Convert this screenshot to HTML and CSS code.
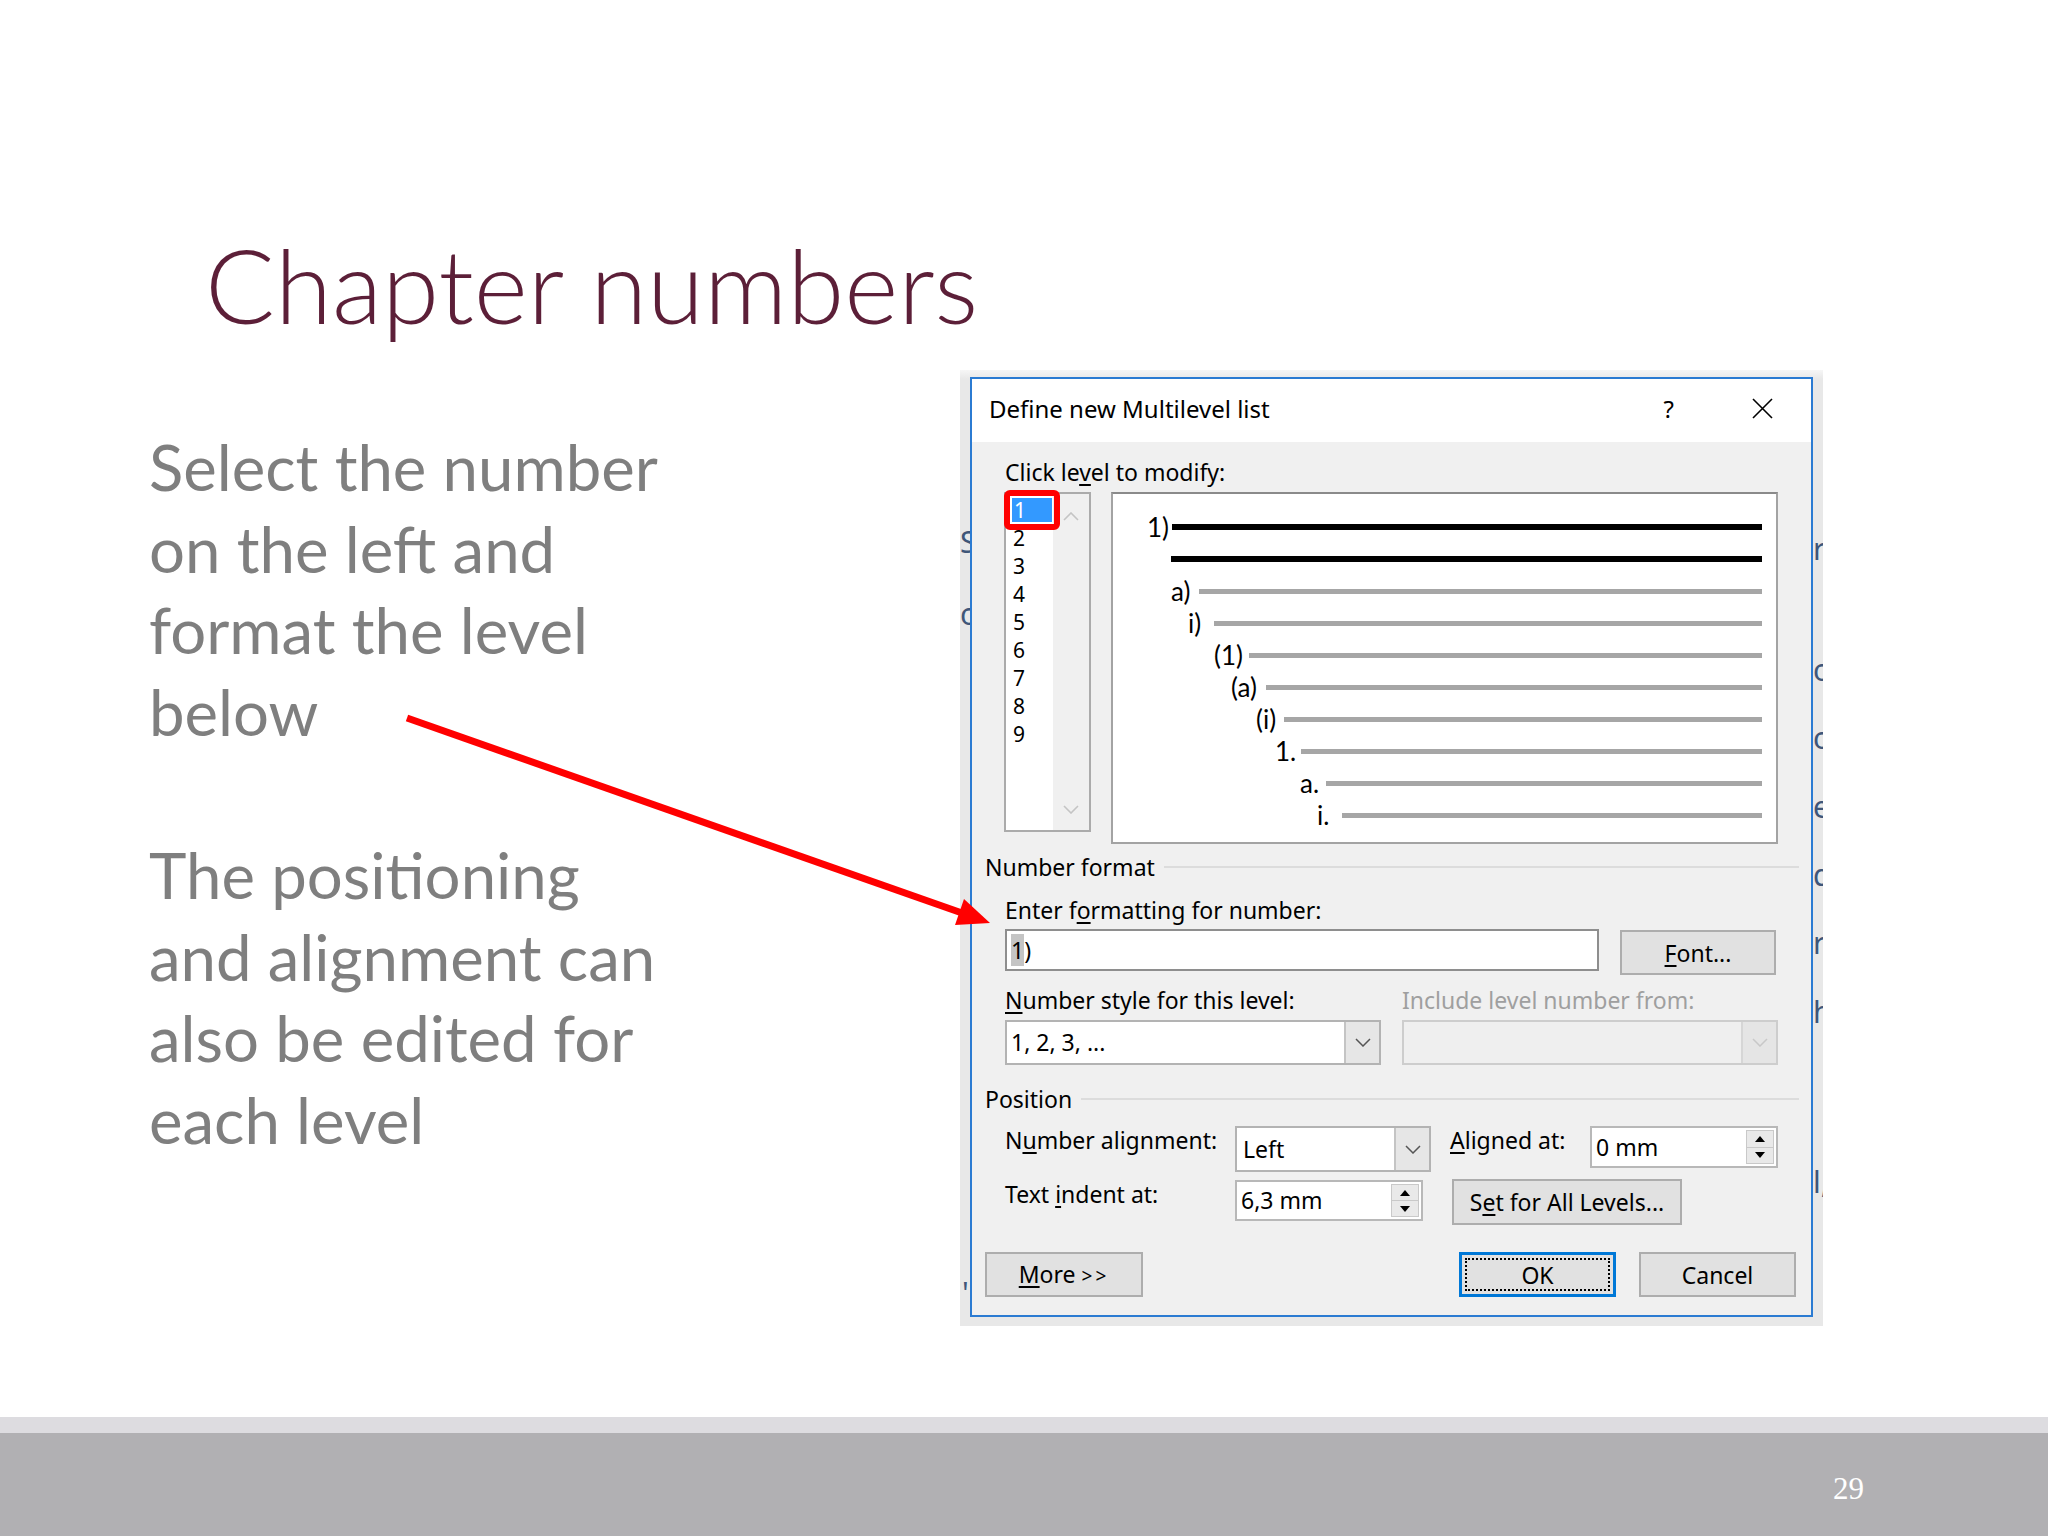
FILE: index.html
```html
<!DOCTYPE html>
<html>
<head>
<meta charset="utf-8">
<title>Chapter numbers</title>
<link rel="stylesheet" href="styles.css">
</head>
<body>
<div class="slide">
  <h1 class="title">Chapter numbers</h1>
  <div class="content">
    <div class="text">
      <p>Select the number<br>on the left and<br>format the level<br>below</p>
      <p>The positioning<br>and alignment can<br>also be edited for<br>each level</p>
    </div>
    <div class="shot">
      <span class="frag fl1">S</span>
      <span class="frag fl2">c</span>
      <span class="frag fl3">'</span>
      <span class="frag fr1">r</span>
      <span class="frag fr2">c</span>
      <span class="frag fr3">c</span>
      <span class="frag fr4">e</span>
      <span class="frag fr5">d</span>
      <span class="frag fr6">r</span>
      <span class="frag fr7">h</span>
      <span class="frag fr8">l,</span>
      <div class="dialog">
        <div class="titlebar">
          <span class="dtitle">Define new Multilevel list</span>
          <span class="help">?</span>
          <svg class="close" width="21" height="21" viewBox="0 0 21 21"><path d="M1 1 L20 20 M20 1 L1 20" stroke="#000" stroke-width="1.6" fill="none"/></svg>
        </div>
        <div class="dbody">
          <div class="lbl ind lbl-click">Click le<u>v</u>el to modify:</div>
          <div class="levels">
            <div class="listbox">
              <div class="nums">
                <div class="num first"><span class="hl">1</span></div>
                <div class="num">2</div>
                <div class="num">3</div>
                <div class="num">4</div>
                <div class="num">5</div>
                <div class="num">6</div>
                <div class="num">7</div>
                <div class="num">8</div>
                <div class="num">9</div>
              </div>
              <div class="sb">
                <svg class="chev up" width="16" height="9" viewBox="0 0 16 9"><polyline points="1,8 8,1 15,8" fill="none" stroke="#c4c4c4" stroke-width="1.6"/></svg>
                <svg class="chev down" width="16" height="9" viewBox="0 0 16 9"><polyline points="1,1 8,8 15,1" fill="none" stroke="#c4c4c4" stroke-width="1.6"/></svg>
              </div>
              <div class="redbox"></div>
            </div>
            <div class="preview">
              <div class="pr r1"><span class="pl">1)</span><span class="ln blk"></span></div>
              <div class="pr r2"><span class="ln blk"></span></div>
              <div class="pr r3"><span class="pl">a)</span><span class="ln"></span></div>
              <div class="pr r4"><span class="pl">i)</span><span class="ln"></span></div>
              <div class="pr r5"><span class="pl">(1)</span><span class="ln"></span></div>
              <div class="pr r6"><span class="pl">(a)</span><span class="ln"></span></div>
              <div class="pr r7"><span class="pl">(i)</span><span class="ln"></span></div>
              <div class="pr r8"><span class="pl">1.</span><span class="ln"></span></div>
              <div class="pr r9"><span class="pl">a.</span><span class="ln"></span></div>
              <div class="pr r10"><span class="pl">i.</span><span class="ln"></span></div>
            </div>
          </div>

          <div class="group g-number"><span>Number format</span><span class="rule"></span></div>
          <div class="lbl ind lbl-enter">Enter f<u>o</u>rmatting for number:</div>
          <div class="row ind row-input">
            <div class="input"><span class="selchar">1</span>)</div>
            <div class="btn btn-font"><span><u>F</u>ont...</span></div>
          </div>
          <div class="row ind row-lbl2">
            <div class="lbl col1"><u>N</u>umber style for this level:</div>
            <div class="lbl disabled">Include level number from:</div>
          </div>
          <div class="row ind row-combos">
            <div class="combo c-style"><span class="ctext">1, 2, 3, ...</span><span class="cbtn"><svg width="16" height="9" viewBox="0 0 16 9"><polyline points="1,1 8,8 15,1" fill="none" stroke="#555" stroke-width="1.5"/></svg></span></div>
            <div class="combo c-include dis"><span class="ctext"></span><span class="cbtn"><svg width="16" height="9" viewBox="0 0 16 9"><polyline points="1,1 8,8 15,1" fill="none" stroke="#c8c8c8" stroke-width="1.5"/></svg></span></div>
          </div>

          <div class="group g-position"><span>Position</span><span class="rule"></span></div>
          <div class="row ind row-pos1">
            <div class="lbl plabel">N<u>u</u>mber alignment:</div>
            <div class="combo c-left"><span class="ctext">Left</span><span class="cbtn"><svg width="16" height="9" viewBox="0 0 16 9"><polyline points="1,1 8,8 15,1" fill="none" stroke="#555" stroke-width="1.5"/></svg></span></div>
            <div class="lbl alabel"><u>A</u>ligned at:</div>
            <div class="spin s-aligned"><span class="stext">0 mm</span><span class="sbtns"><span class="sb-up"><svg width="10" height="6" viewBox="0 0 10 6"><polygon points="0,6 5,0 10,6" fill="#000"/></svg></span><span class="sb-dn"><svg width="10" height="6" viewBox="0 0 10 6"><polygon points="0,0 5,6 10,0" fill="#000"/></svg></span></span></div>
          </div>
          <div class="row ind row-pos2">
            <div class="lbl plabel tlabel">Text <u>i</u>ndent at:</div>
            <div class="spin s-indent"><span class="stext">6,3 mm</span><span class="sbtns"><span class="sb-up"><svg width="10" height="6" viewBox="0 0 10 6"><polygon points="0,6 5,0 10,6" fill="#000"/></svg></span><span class="sb-dn"><svg width="10" height="6" viewBox="0 0 10 6"><polygon points="0,0 5,6 10,0" fill="#000"/></svg></span></span></div>
            <div class="btn btn-setall"><span>S<u>e</u>t for All Levels...</span></div>
          </div>

          <div class="row row-buttons">
            <div class="btn btn-more"><span><u>M</u>ore <span class="gt">&gt;&gt;</span></span></div>
            <div class="btn btn-ok"><span class="focus">OK</span></div>
            <div class="btn btn-cancel"><span>Cancel</span></div>
          </div>
        </div>
      </div>
    </div>
  </div>
  <svg class="arrow" width="2048" height="1536" viewBox="0 0 2048 1536">
    <line x1="407" y1="718" x2="962" y2="913" stroke="#ff0000" stroke-width="7"/>
    <polygon points="990,923 955,925 964,899" fill="#ff0000"/>
  </svg>
  <div class="footer">
    <div class="band1"></div>
    <div class="band2"><span class="pagenum">29</span></div>
  </div>
</div>
</body>
</html>
```

FILE: styles.css
```css
* { box-sizing: border-box; margin: 0; padding: 0; }
html, body { width: 2048px; height: 1536px; background: #ffffff; overflow: hidden; }

.slide {
  position: relative;
  width: 2048px;
  height: 1536px;
  display: flex;
  flex-direction: column;
  padding-top: 223px;
  background: #ffffff;
}

.title {
  font-family: Lato, "Noto Sans", sans-serif;
  font-weight: 300;
  font-size: 103.5px;
  line-height: 122px;
  height: 122px;
  color: #5c1f38;
  margin-left: 205px;
  white-space: nowrap;
}

.content {
  display: flex;
  align-items: flex-start;
  margin-top: 25px;
}

.text {
  width: 960px;
  flex-shrink: 0;
  padding-left: 149px;
  margin-top: 56px;
  font-family: Lato, "Noto Sans", sans-serif;
  font-size: 63.5px;
  line-height: 81.6px;
  color: #7f7f7f;
  white-space: nowrap;
}
.text p + p { margin-top: 81.6px; }

/* screenshot frame */
.shot {
  position: relative;
  flex-shrink: 0;
  width: 863px;
  height: 956px;
  background: linear-gradient(#f6f6f6, #e8e8e8 9px);
  overflow: hidden;
  padding: 7px 10px 0 10px;
}
.frag {
  position: absolute;
  font-family: "Noto Sans", sans-serif;
  font-size: 30px;
  line-height: 40px;
  color: #3f5679;
}
.fl1 { left: 0px; top: 152px; }
.fl2 { left: 0px; top: 224px; }
.fl3 { left: 2px; top: 903px; }
.fr1 { left: 853px; top: 159px; }
.fr2 { left: 853px; top: 280px; }
.fr3 { left: 853px; top: 348px; }
.fr4 { left: 853px; top: 417px; }
.fr5 { left: 853px; top: 485px; }
.fr6 { left: 853px; top: 553px; }
.fr7 { left: 853px; top: 622px; }
.fr8 { left: 853px; top: 792px; }

.dialog {
  position: relative;
  width: 843px;
  height: 940px;
  border: 2px solid #2b7bd2;
  background: #f0f0f0;
  display: flex;
  flex-direction: column;
  font-family: "Noto Sans", sans-serif;
  font-size: 23px;
  color: #000;
}
.dialog u { text-decoration-thickness: 2px; text-underline-offset: 3px; }

.titlebar {
  height: 63px;
  background: #ffffff;
  display: flex;
  align-items: flex-start;
  padding-left: 17px;
  padding-top: 18px;
}
.dtitle { flex: 1; font-size: 24px; line-height: 24px; white-space: nowrap; }
.help { font-size: 24px; line-height: 24px; margin-right: 78px; }
.close { margin-top: 1px; margin-right: 38px; }

.dbody {
  display: flex;
  flex-direction: column;
  padding: 0 12px 0 13px;
}
.lbl { line-height: 24px; white-space: nowrap; }
.ind { margin-left: 20px; }
.lbl-click { margin-top: 18px; }

.levels {
  display: flex;
  align-items: flex-start;
  margin-top: 8px;
  margin-left: 19px;
  height: 352px;
}
.listbox {
  position: relative;
  width: 87px;
  height: 340px;
  border: 2px solid #ababab;
  background: #ffffff;
  display: flex;
}
.nums { width: 47px; padding-top: 2px; font-size: 21px; }
.num { height: 28px; line-height: 28px; padding-left: 7px; }
.num.first { padding-left: 6px; padding-top: 2px; }
.hl {
  display: block;
  width: 40px;
  height: 24px;
  line-height: 24px;
  padding-left: 2px;
  background: #3399ff;
  color: #ffffff;
}
.sb {
  flex: 1;
  background: #f0f0f0;
  display: flex;
  flex-direction: column;
  justify-content: space-between;
  align-items: center;
  padding: 18px 0 16px 0;
}
.redbox {
  position: absolute;
  left: -2px;
  top: -4px;
  width: 56px;
  height: 40px;
  border: 6px solid #ff0000;
  border-radius: 6px;
}

.preview {
  width: 667px;
  height: 352px;
  margin-left: 20px;
  border: 2px solid #a3a3a3;
  border-top-color: #8a8a8a;
  background: #ffffff;
  padding-top: 17px;
  padding-right: 14px;
}
.pr {
  display: flex;
  align-items: center;
  height: 32px;
}
.pl {
  font-family: Lato, "Noto Sans", sans-serif;
  font-size: 26px;
  line-height: 32px;
  height: 32px;
  white-space: nowrap;
  flex-shrink: 0;
}
.ln { flex: 1; height: 5px; background: #a6a6a6; }
.ln.blk { height: 6px; background: #000000; }
.r1 { padding-left: 34px; } .r1 .pl { width: 25px; }
.r2 { padding-left: 58px; }
.r3 { padding-left: 58px; } .r3 .pl { width: 28px; }
.r4 { padding-left: 75px; } .r4 .pl { width: 26px; }
.r5 { padding-left: 101px; } .r5 .pl { width: 35px; }
.r6 { padding-left: 118px; } .r6 .pl { width: 35px; }
.r7 { padding-left: 143px; } .r7 .pl { width: 28px; }
.r8 { padding-left: 162px; } .r8 .pl { width: 26px; }
.r9 { padding-left: 187px; } .r9 .pl { width: 26px; }
.r10 { padding-left: 204px; } .r10 .pl { width: 25px; }

.group {
  display: flex;
  align-items: center;
  line-height: 24px;
  height: 24px;
  white-space: nowrap;
}
.group .rule { flex: 1; height: 2px; background: #dcdcdc; margin-left: 9px; }
.g-number { margin-top: 11px; }
.g-position { margin-top: 22px; }

.lbl-enter { margin-top: 19px; }
.row { display: flex; align-items: flex-start; }
.row-input { margin-top: 7px; height: 46px; }
.input {
  width: 594px;
  height: 42px;
  border: 2px solid #8e8e8e;
  background: #ffffff;
  line-height: 38px;
  padding-left: 4px;
  white-space: nowrap;
}
.selchar { background: #c4c4c4; }

.btn {
  display: flex;
  align-items: center;
  justify-content: center;
  background: #e1e1e1;
  border: 2px solid #adadad;
  white-space: nowrap;
  line-height: 24px;
}
.btn-font { width: 156px; height: 45px; margin-left: 21px; margin-top: 1px; }

.row-lbl2 { margin-top: 13px; }
.col1 { width: 397px; }
.disabled { color: #9f9f9f; }

.row-combos { margin-top: 8px; }
.combo {
  display: flex;
  background: #ffffff;
  border: 2px solid #b3b3b3;
  white-space: nowrap;
}
.ctext { flex: 1; padding-left: 4px; }
.cbtn {
  width: 35px;
  display: flex;
  align-items: center;
  justify-content: center;
  background: #e6e6e6;
  border-left: 2px solid #c4c4c4;
}
.c-style { width: 376px; height: 45px; line-height: 41px; }
.c-include { width: 376px; height: 45px; margin-left: 21px; }
.combo.dis { background: #efefef; border-color: #cdcdcd; }
.combo.dis .cbtn { background: #e5e5e5; border-left-color: #d6d6d6; }

.row-pos1 { margin-top: 15px; height: 46px; }
.plabel { width: 230px; padding-top: 2px; }
.c-left { width: 196px; height: 46px; line-height: 42px; }
.c-left .ctext { padding-left: 6px; }
.alabel { width: 140px; margin-left: 19px; padding-top: 2px; }
.spin {
  display: flex;
  background: #ffffff;
  border: 2px solid #b8b8b8;
  white-space: nowrap;
}
.stext { flex: 1; padding-left: 4px; }
.sbtns {
  width: 30px;
  display: flex;
  flex-direction: column;
  padding: 2px 2px 2px 0;
}
.sb-up, .sb-dn {
  flex: 1;
  display: flex;
  align-items: center;
  justify-content: center;
  background: #e9e9e9;
  border: 1px solid #c9c9c9;
}
.sb-dn { border-top: none; }
.s-aligned { width: 188px; height: 42px; line-height: 38px; }

.row-pos2 { margin-top: 7px; height: 46px; }
.tlabel { padding-top: 3px; }
.s-indent { width: 188px; height: 41px; line-height: 37px; margin-top: 1px; }
.btn-setall { width: 230px; height: 46px; margin-left: 29px; }

.row-buttons { margin-top: 27px; height: 45px; }
.btn-more { width: 158px; height: 45px; }
.gt { letter-spacing: 3px; font-size: 19px; }
.btn-ok {
  width: 157px;
  height: 45px;
  margin-left: 316px;
  border: 3px solid #0078d7;
  padding: 3px;
}
.btn-ok .focus {
  flex: 1;
  align-self: stretch;
  display: flex;
  align-items: center;
  justify-content: center;
  border: 2px dotted #000000;
}
.btn-cancel { width: 157px; height: 45px; margin-left: 23px; }

.arrow { position: absolute; left: 0; top: 0; pointer-events: none; }

.footer { margin-top: auto; }
.band1 { height: 16px; background: #dddce0; }
.band2 { height: 103px; background: #b1b0b3; padding-left: 1833px; padding-top: 40px; }
.pagenum {
  display: block;
  font-family: "Liberation Serif", serif;
  font-size: 31px;
  line-height: 31px;
  color: #ffffff;
}
```
